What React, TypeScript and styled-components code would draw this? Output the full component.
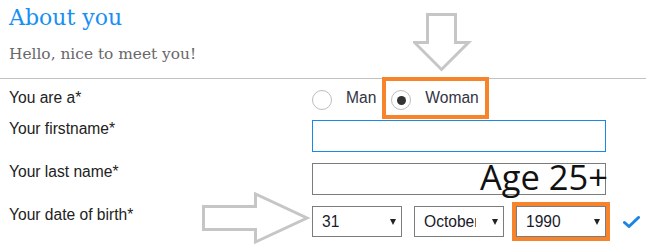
import styled, { createGlobalStyle } from 'styled-components';

const GlobalStyle = createGlobalStyle`
  html, body {
    margin: 0;
    padding: 0;
    background: #ffffff;
  }

  body {
    font-family: "Liberation Sans", Arial, sans-serif;
    color: #222222;
  }
`;

const days = ['29', '30', '31'];
const months = ['September', 'October', 'November'];
const years = ['1989', '1990', '1991'];

const App = () => {
  return (
    <>
      <GlobalStyle />
      <Page>
        <Header>
          <Title>About you</Title>
          <Subtitle>Hello, nice to meet you!</Subtitle>
        </Header>
        <Divider />
        <Form>
          <Row $height={20}>
            <Label>You are a*</Label>
            <RadioGroup>
              <RadioOption>
                <RadioCircle $checked={false} />
                <OptionText>Man</OptionText>
              </RadioOption>
              <RadioOption>
                <RadioCircle $checked />
                <OptionText>Woman</OptionText>
                <Highlight $top={-12} $right={-10} $bottom={-9} $left={-9} />
              </RadioOption>
            </RadioGroup>
          </Row>
          <Row $height={32}>
            <Label>Your firstname*</Label>
            <TextInput type="text" $focused />
          </Row>
          <Row $height={32}>
            <Label>Your last name*</Label>
            <FieldBox>
              <TextInput type="text" $focused={false} />
              <AgeNote>Age 25+</AgeNote>
            </FieldBox>
          </Row>
          <Row $height={31}>
            <Label>Your date of birth*</Label>
            <SelectRow>
              <SelectBox>
                <Select defaultValue="31">
                  {days.map((d) => (
                    <option key={d}>{d}</option>
                  ))}
                </Select>
                <Caret />
              </SelectBox>
              <SelectBox>
                <Select defaultValue="October">
                  {months.map((m) => (
                    <option key={m}>{m}</option>
                  ))}
                </Select>
                <Caret />
              </SelectBox>
              <SelectBox>
                <Select defaultValue="1990">
                  {years.map((y) => (
                    <option key={y}>{y}</option>
                  ))}
                </Select>
                <Caret />
                <Highlight $top={-4} $right={-4} $bottom={-4} $left={-4} />
              </SelectBox>
              <CheckIcon viewBox="0 0 17 12" aria-hidden="true">
                <path d="M1.5 6.5 L6 10.5 L15.5 1.5" />
              </CheckIcon>
            </SelectRow>
          </Row>
        </Form>

        <DownArrow viewBox="0 0 60 60" aria-hidden="true">
          <polygon points="14.5,1.5 42.5,1.5 42.5,29.5 55.5,29.5 28.5,56.5 1.5,29.5 14.5,29.5" />
        </DownArrow>
        <RightArrow viewBox="0 0 110 54" aria-hidden="true">
          <polygon points="1.5,14.5 53.5,14.5 53.5,2 105,26 53.5,50 53.5,37.5 1.5,37.5" />
        </RightArrow>
      </Page>
    </>
  );
};

const Page = styled.div`
  position: relative;
  width: 646px;
  height: 247px;
  overflow: hidden;
`;

const Header = styled.header`
  padding: 5px 9px 15px;
`;

const Title = styled.h2`
  margin: 0;
  font-family: "DejaVu Serif", "Liberation Serif", serif;
  font-size: 22px;
  font-weight: 400;
  line-height: 26px;
  color: #1690f2;
`;

const Subtitle = styled.p`
  margin: 14px 0 0;
  font-family: "DejaVu Serif", "Liberation Serif", serif;
  font-size: 15.4px;
  line-height: 18px;
  color: #686868;
`;

const Divider = styled.hr`
  height: 1px;
  margin: 0;
  border: 0;
  background-color: #c2c2c2;
`;

const Form = styled.form`
  display: flex;
  flex-direction: column;
  row-gap: 11px;
  padding: 10px 0 0 9px;
`;

const Row = styled.div<{ $height: number }>`
  display: flex;
  align-items: flex-start;
  height: ${({ $height }) => $height}px;
`;

const Label = styled.label`
  flex: 0 0 303px;
  font-size: 15.6px;
  line-height: 18px;
  color: #222222;
`;

const RadioGroup = styled.div`
  display: flex;
  column-gap: 15px;
`;

const RadioOption = styled.label`
  position: relative;
  display: flex;
  align-items: flex-start;
`;

const RadioCircle = styled.span<{ $checked: boolean }>`
  position: relative;
  box-sizing: border-box;
  width: 20px;
  height: 20px;
  margin: 1px 14px 0 0;
  border: 1px solid #bdbdbd;
  border-radius: 50%;
  background: #ffffff;

  &::after {
    content: '';
    display: ${({ $checked }) => ($checked ? 'block' : 'none')};
    position: absolute;
    top: 4.5px;
    left: 4.5px;
    width: 9px;
    height: 9px;
    border-radius: 50%;
    background: #333333;
  }
`;

const OptionText = styled.span`
  font-size: 15.6px;
  line-height: 18px;
  color: #333344;
`;

const Highlight = styled.span<{ $top: number; $right: number; $bottom: number; $left: number }>`
  position: absolute;
  top: ${({ $top }) => $top}px;
  right: ${({ $right }) => $right}px;
  bottom: ${({ $bottom }) => $bottom}px;
  left: ${({ $left }) => $left}px;
  border: 4px solid #f7832b;
  pointer-events: none;
`;

const FieldBox = styled.div`
  position: relative;
`;

const TextInput = styled.input<{ $focused: boolean }>`
  box-sizing: border-box;
  display: block;
  width: 294px;
  height: 32px;
  margin: 0;
  padding: 0 8px;
  border: 1px solid ${({ $focused }) => ($focused ? '#1a88e6' : '#7c7c7c')};
  border-radius: 0;
  font-family: "Liberation Sans", Arial, sans-serif;
  font-size: 15.6px;
  background: #ffffff;
  outline: none;
`;

const AgeNote = styled.span`
  position: absolute;
  top: -3px;
  right: -2px;
  font-family: "Open Sans", "Noto Sans", sans-serif;
  font-size: 34.5px;
  font-weight: 400;
  line-height: 34px;
  color: #111111;
  white-space: nowrap;
  pointer-events: none;
`;

const SelectRow = styled.div`
  display: flex;
  align-items: center;
  column-gap: 12px;
`;

const SelectBox = styled.div`
  position: relative;
  width: 90px;
  height: 31px;
`;

const Select = styled.select`
  box-sizing: border-box;
  width: 100%;
  height: 100%;
  margin: 0;
  padding: 0 27px 0 9px;
  border: 1px solid #7c7c7c;
  border-radius: 0;
  appearance: none;
  background: #ffffff;
  font-family: "Liberation Sans", Arial, sans-serif;
  font-size: 15.6px;
  color: #1a1a2a;
  outline: none;
`;

const Caret = styled.span`
  position: absolute;
  top: 13px;
  right: 6px;
  width: 0;
  height: 0;
  border-left: 3px solid transparent;
  border-right: 3px solid transparent;
  border-top: 6px solid #222222;
  pointer-events: none;
`;

const CheckIcon = styled.svg`
  width: 17px;
  height: 12px;
  margin-left: 5px;
  fill: none;
  stroke: #1a86e4;
  stroke-width: 3;
  stroke-linecap: round;
  stroke-linejoin: round;
`;

const DownArrow = styled.svg`
  position: absolute;
  top: 13px;
  left: 413px;
  width: 60px;
  height: 60px;
  fill: #ffffff;
  stroke: #c6c6c6;
  stroke-width: 3;
  pointer-events: none;
`;

const RightArrow = styled.svg`
  position: absolute;
  top: 192px;
  left: 202px;
  width: 110px;
  height: 54px;
  fill: #ffffff;
  stroke: #c6c6c6;
  stroke-width: 3;
  pointer-events: none;
`;

export default App;
